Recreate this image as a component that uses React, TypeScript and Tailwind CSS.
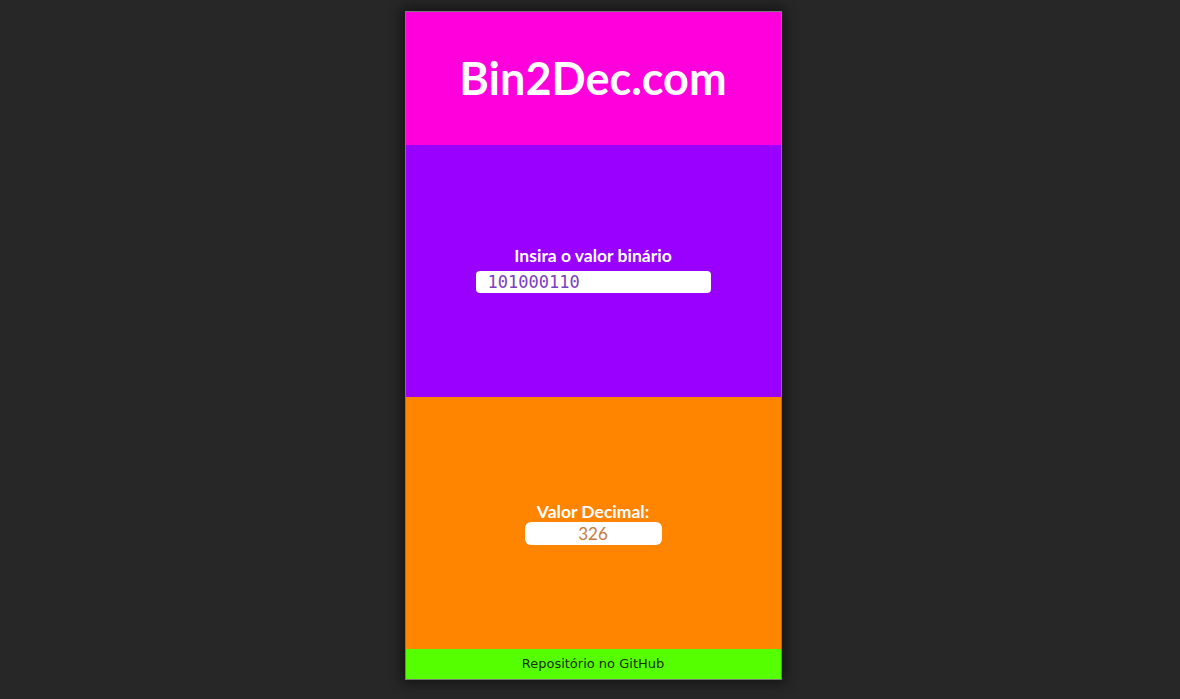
export default function App() {
  return (
    <div className="min-h-[699px] w-full bg-[#272727] flex justify-center pt-[11px] pl-[6px]">
      <div
        className="w-[377px] h-[669px] flex flex-col border border-[#7a7a7a] shadow-[0_0_12px_4px_rgba(0,0,0,0.45)]"
        style={{ fontFamily: "Lato, 'Open Sans', sans-serif" }}
      >
        <header className="h-[133px] bg-[#ff00dc] flex items-center justify-center">
          <h1 className="text-[45px] font-bold text-white leading-none">Bin2Dec.com</h1>
        </header>
        <section className="h-[252px] bg-[#9900ff] flex flex-col items-center justify-center gap-[5px] pb-[4px]">
          <label className="text-[17.5px] font-bold text-white leading-tight">Insira o valor binário</label>
          <div className="w-[235px] h-[22px] bg-white rounded-[4px] flex items-center pl-[12px]">
            <span
              className="text-[17px] text-[#7b3fc2] leading-none"
              style={{ fontFamily: "'DejaVu Sans Mono', monospace" }}
            >
              101000110
            </span>
          </div>
        </section>
        <section className="h-[252px] bg-[#ff8400] flex flex-col items-center justify-center gap-0">
          <label className="text-[17.5px] font-bold text-white leading-tight">Valor Decimal:</label>
          <div className="w-[137px] h-[23px] bg-white rounded-[6px] flex items-center justify-center">
            <span className="text-[17px] text-[#c87a3c] leading-none">326</span>
          </div>
        </section>
        <footer className="flex-1 bg-[#55ff00] flex items-center justify-center">
          <a
            className="text-[13px] text-[#183008]"
            style={{ fontFamily: "'DejaVu Sans', sans-serif" }}
          >
            Repositório no GitHub
          </a>
        </footer>
      </div>
    </div>
  );
}
